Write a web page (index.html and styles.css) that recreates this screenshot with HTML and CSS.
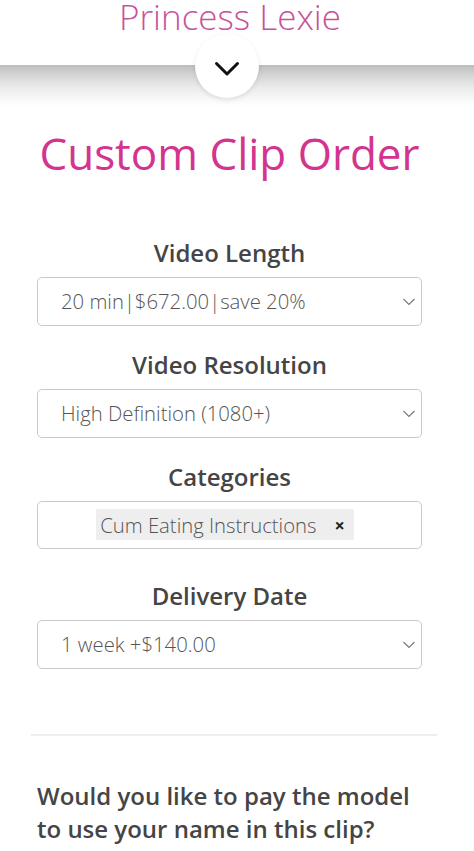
FILE: index.html
```html
<!DOCTYPE html>
<html>
<head>
<meta charset="utf-8">
<link rel="stylesheet" href="styles.css">
</head>
<body>
<header class="top">
  <div class="brand">Princess Lexie</div>
</header>
<div class="shade">
  <div class="toggle">
    <svg width="26" height="16" viewBox="0 0 26 16"><path d="M2.5 2.5 L13 13 L23.5 2.5" fill="none" stroke="#111" stroke-width="3" stroke-linecap="round" stroke-linejoin="round"/></svg>
  </div>
</div>
<main class="content">
  <h1 class="title">Custom Clip Order</h1>
  <div class="field">
    <div class="label">Video Length</div>
    <div class="select"><span>20 min|$672.00|save 20%</span><svg class="caret" width="12" height="8" viewBox="0 0 12 8"><path d="M0.5 1 L6 6.5 L11.5 1" fill="none" stroke="#777" stroke-width="1.1"/></svg></div>
  </div>
  <div class="field">
    <div class="label">Video Resolution</div>
    <div class="select"><span>High Definition (1080+)</span><svg class="caret" width="12" height="8" viewBox="0 0 12 8"><path d="M0.5 1 L6 6.5 L11.5 1" fill="none" stroke="#777" stroke-width="1.1"/></svg></div>
  </div>
  <div class="field cats">
    <div class="label">Categories</div>
    <div class="multi"><span class="tag">Cum Eating Instructions<span class="x">×</span></span></div>
  </div>
  <div class="field last">
    <div class="label">Delivery Date</div>
    <div class="select"><span>1 week +$140.00</span><svg class="caret" width="12" height="8" viewBox="0 0 12 8"><path d="M0.5 1 L6 6.5 L11.5 1" fill="none" stroke="#777" stroke-width="1.1"/></svg></div>
  </div>
  <hr class="rule">
  <p class="question">Would you like to pay the model to use your name in this clip?</p>
</main>
</body>
</html>
```
FILE: styles.css
```css
* { box-sizing: border-box; }
body {
  margin: 0;
  font-family: "Open Sans", "Noto Sans", sans-serif;
  background: #fff;
  overflow: hidden;
}
.top {
  height: 65px;
  background: #fff;
  display: flex;
  justify-content: center;
  padding-right: 14px;
}
.brand {
  font-weight: 300;
  font-size: 35px;
  color: #c9519b;
  line-height: 34px;
}
.shade {
  height: 42px;
  background: linear-gradient(to bottom, #bdbdbd 0%, #d6d6d6 25%, #ececec 55%, #fafafa 85%, #fff 100%);
  display: flex;
  justify-content: center;
  padding-right: 20px;
}
.toggle {
  width: 64px;
  height: 64px;
  border-radius: 50%;
  background: #fff;
  margin-top: -31.5px;
  box-shadow: 0 2px 5px rgba(0,0,0,0.10);
  display: flex;
  align-items: center;
  justify-content: center;
  padding-top: 6px;
}
.content {
  padding: 0 52px 0 37px;
  margin-top: 17.5px;
}
.title {
  margin: 0 -20px 57px -20px;
  text-align: center;
  font-weight: 400;
  font-size: 44px;
  line-height: 56px;
  color: #d3348f;
}
.field {
  display: flex;
  flex-direction: column;
  align-items: stretch;
  margin-bottom: 24px;
}
.field.cats { margin-bottom: 32px; }
.field.last { margin-bottom: 0; }
.label {
  text-align: center;
  font-weight: 600;
  font-size: 24px;
  line-height: 30px;
  color: #454545;
  margin-bottom: 9px;
}
.select {
  height: 49px;
  border: 1px solid #cacaca;
  border-radius: 5px;
  display: flex;
  align-items: center;
  justify-content: space-between;
  padding: 0 6px 0 23px;
  font-size: 20.3px;
  font-weight: 300;
  color: #555;
}
.caret { margin-top: 1px; }
.multi {
  height: 48px;
  border: 1px solid #cacaca;
  border-radius: 5px;
  display: flex;
  align-items: center;
  justify-content: center;
  padding-right: 9px;
}
.tag {
  background: #eeeeee;
  border-radius: 2px;
  height: 31px;
  display: flex;
  align-items: center;
  padding: 0 9px 0 4px;
  font-size: 20.3px;
  font-weight: 300;
  color: #555;
}
.x {
  font-size: 18px;
  font-weight: 700;
  color: #222;
  margin-left: 18px;
}
.rule {
  border: 0;
  border-top: 2px solid #eeeeee;
  margin: 65px -15px 0 -6px;
}
.question {
  margin: 43px 0 0 0;
  font-weight: 600;
  font-size: 24px;
  line-height: 33px;
  color: #454545;
}
```
